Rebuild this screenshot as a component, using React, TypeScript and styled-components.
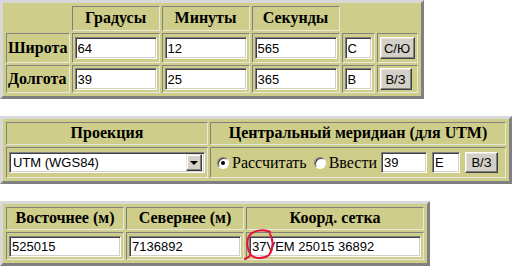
import styled, { createGlobalStyle } from 'styled-components'

const GlobalStyle = createGlobalStyle`
  body {
    margin: 0;
    background: #ffffff;
    font-family: "Liberation Serif", "Times New Roman", serif;
  }
`

const Page = styled.div`
  display: flex;
  flex-direction: column;
  align-items: flex-start;
  gap: 17px;
`

const Panel = styled.table`
  background: #cece8a;
  border: 3px solid;
  border-color: #d8d8d8 #808080 #808080 #d8d8d8;
  border-collapse: separate;
  border-spacing: 2px;
  padding: 1px;
`

const HeadCell = styled.th<{ $bare?: boolean; $w?: number; $compact?: boolean }>`
  border: 1px solid;
  border-color: ${(p) => (p.$bare ? 'transparent' : '#808080 #e8e8e0 #e8e8e0 #808080')};
  padding: ${(p) => (p.$compact ? '1px 2px 2px' : '2px 2px 3px')};
  font: bold 16px "Liberation Serif", "Times New Roman", serif;
  line-height: 18px;
  text-align: center;
  color: #000;
  ${(p) => (p.$w ? `width: ${p.$w}px;` : '')}
`

const RowLabel = styled.th`
  border: 1px solid;
  border-color: #808080 #e8e8e0 #e8e8e0 #808080;
  padding: 2px 1px;
  font: bold 16px "Liberation Serif", "Times New Roman", serif;
  text-align: left;
  color: #000;
`

const Cell = styled.td<{ $pad?: string }>`
  border: 1px solid;
  border-color: #808080 #e8e8e0 #e8e8e0 #808080;
  padding: ${(p) => p.$pad ?? '3px 2px'};
  vertical-align: middle;
`

const Field = styled.input<{ $w: number; $h?: number }>`
  display: block;
  box-sizing: border-box;
  width: ${(p) => p.$w}px;
  height: ${(p) => p.$h ?? 22}px;
  margin: 0;
  padding: 0 2px;
  border: 1px solid;
  border-color: #808080 #ffffff #ffffff #808080;
  box-shadow: inset 1px 1px 0 #404040, inset -1px -1px 0 #d4d0c8;
  background: #fff;
  color: #000;
  font: 13px "Liberation Sans", Arial, sans-serif;
  outline: none;
`

const Button = styled.button<{ $w: number; $h?: number }>`
  display: block;
  box-sizing: border-box;
  width: ${(p) => p.$w}px;
  height: ${(p) => p.$h ?? 22}px;
  margin: 0;
  padding: 0;
  border: 1px solid;
  border-color: #ffffff #404040 #404040 #ffffff;
  box-shadow: inset -1px -1px 0 #808080, inset 1px 1px 0 #e8e4dc;
  background: #d4d0c8;
  color: #000;
  font: 13px "Liberation Sans", Arial, sans-serif;
`

const Select = styled.div`
  box-sizing: border-box;
  width: 196px;
  height: 21px;
  display: flex;
  align-items: center;
  border: 1px solid;
  border-color: #808080 #ffffff #ffffff #808080;
  box-shadow: inset 1px 1px 0 #404040, inset -1px -1px 0 #d4d0c8;
  background: #fff;
  padding: 2px;
  font: 13px "Liberation Sans", Arial, sans-serif;
  color: #000;
`

const SelectText = styled.span`
  flex: 1;
  padding-left: 1px;
`

const DropButton = styled.span`
  box-sizing: border-box;
  width: 16px;
  height: 17px;
  display: flex;
  align-items: center;
  justify-content: center;
  background: #d4d0c8;
  border: 1px solid;
  border-color: #e8e4dc #404040 #404040 #e8e4dc;
  box-shadow: inset -1px -1px 0 #808080, inset 1px 1px 0 #ffffff;
`

const Arrow = styled.span`
  width: 0;
  height: 0;
  border-left: 4px solid transparent;
  border-right: 4px solid transparent;
  border-top: 4px solid #000;
`

const ControlRow = styled.div`
  display: flex;
  align-items: center;
  font: 16px "Liberation Serif", "Times New Roman", serif;
  color: #000;
  padding-left: 4px;
`

const Radio = styled.span<{ $on?: boolean }>`
  box-sizing: border-box;
  width: 12px;
  height: 12px;
  border-radius: 50%;
  background: #fff;
  border: 1px solid;
  border-color: #808080 #ffffff #ffffff #808080;
  box-shadow: inset 1px 1px 0 #404040;
  display: flex;
  align-items: center;
  justify-content: center;
  margin-right: 3px;
  &::after {
    content: '';
    width: 4px;
    height: 4px;
    border-radius: 50%;
    background: ${(p) => (p.$on ? '#000' : 'transparent')};
  }
`

const Label = styled.span<{ $gap: number }>`
  margin-right: ${(p) => p.$gap}px;
`

const Spaced = styled.span<{ $gap: number }>`
  margin-right: ${(p) => p.$gap}px;
`

const Marked = styled.div`
  position: relative;
`

const Scribble = styled.svg`
  position: absolute;
  left: -5px;
  top: -8px;
  pointer-events: none;
`

export default function App() {
  return (
    <>
      <GlobalStyle />
      <Page>
        <Panel>
          <tbody>
            <tr>
              <HeadCell $bare />
              <HeadCell>Градусы</HeadCell>
              <HeadCell>Минуты</HeadCell>
              <HeadCell>Секунды</HeadCell>
              <HeadCell $bare colSpan={2} />
            </tr>
            <tr>
              <RowLabel>Широта</RowLabel>
              <Cell><Field $w={82} defaultValue="64" /></Cell>
              <Cell><Field $w={82} defaultValue="12" /></Cell>
              <Cell><Field $w={82} defaultValue="565" /></Cell>
              <Cell><Field $w={27} defaultValue="C" /></Cell>
              <Cell><Button $w={35}>С/Ю</Button></Cell>
            </tr>
            <tr>
              <RowLabel>Долгота</RowLabel>
              <Cell $pad="2px"><Field $w={82} defaultValue="39" /></Cell>
              <Cell $pad="2px"><Field $w={82} defaultValue="25" /></Cell>
              <Cell $pad="2px"><Field $w={82} defaultValue="365" /></Cell>
              <Cell $pad="2px"><Field $w={27} defaultValue="B" /></Cell>
              <Cell $pad="2px"><Button $w={32}>В/З</Button></Cell>
            </tr>
          </tbody>
        </Panel>

        <Panel>
          <tbody>
            <tr>
              <HeadCell $compact $w={196}>Проекция</HeadCell>
              <HeadCell $compact $w={290}>Центральный меридиан (для UTM)</HeadCell>
            </tr>
            <tr>
              <Cell $pad="4px 2px">
                <Select>
                  <SelectText>UTM (WGS84)</SelectText>
                  <DropButton><Arrow /></DropButton>
                </Select>
              </Cell>
              <Cell $pad="4px 2px">
                <ControlRow>
                  <Radio $on />
                  <Label $gap={7}>Рассчитать</Label>
                  <Radio />
                  <Label $gap={4}>Ввести</Label>
                  <Spaced $gap={5}><Field $w={46} $h={21} defaultValue="39" /></Spaced>
                  <Spaced $gap={5}><Field $w={28} $h={21} defaultValue="E" /></Spaced>
                  <Button $w={33} $h={21}>В/З</Button>
                </ControlRow>
              </Cell>
            </tr>
          </tbody>
        </Panel>

        <Panel>
          <tbody>
            <tr>
              <HeadCell $compact>Восточнее (м)</HeadCell>
              <HeadCell $compact>Севернее (м)</HeadCell>
              <HeadCell $compact>Коорд. сетка</HeadCell>
            </tr>
            <tr>
              <Cell $pad="3px 2px 2px"><Field $w={112} $h={21} defaultValue="525015" /></Cell>
              <Cell $pad="3px 2px 2px"><Field $w={112} $h={21} defaultValue="7136892" /></Cell>
              <Cell $pad="3px 2px 2px">
                <Marked>
                  <Field $w={172} $h={21} defaultValue="37VEM 25015 36892" />
                  <Scribble width="34" height="36" viewBox="0 0 34 36">
                    <path
                      d="M26 4 C20 1 9 2 5 8 C2 13 3 22 7 27 C11 31 20 31 25 27 C29 22 30 12 26 6 M7 27 C5 29 3 30 1 31"
                      fill="none"
                      stroke="#e8103c"
                      strokeWidth="2"
                      strokeLinecap="round"
                    />
                  </Scribble>
                </Marked>
              </Cell>
            </tr>
          </tbody>
        </Panel>
      </Page>
    </>
  )
}
